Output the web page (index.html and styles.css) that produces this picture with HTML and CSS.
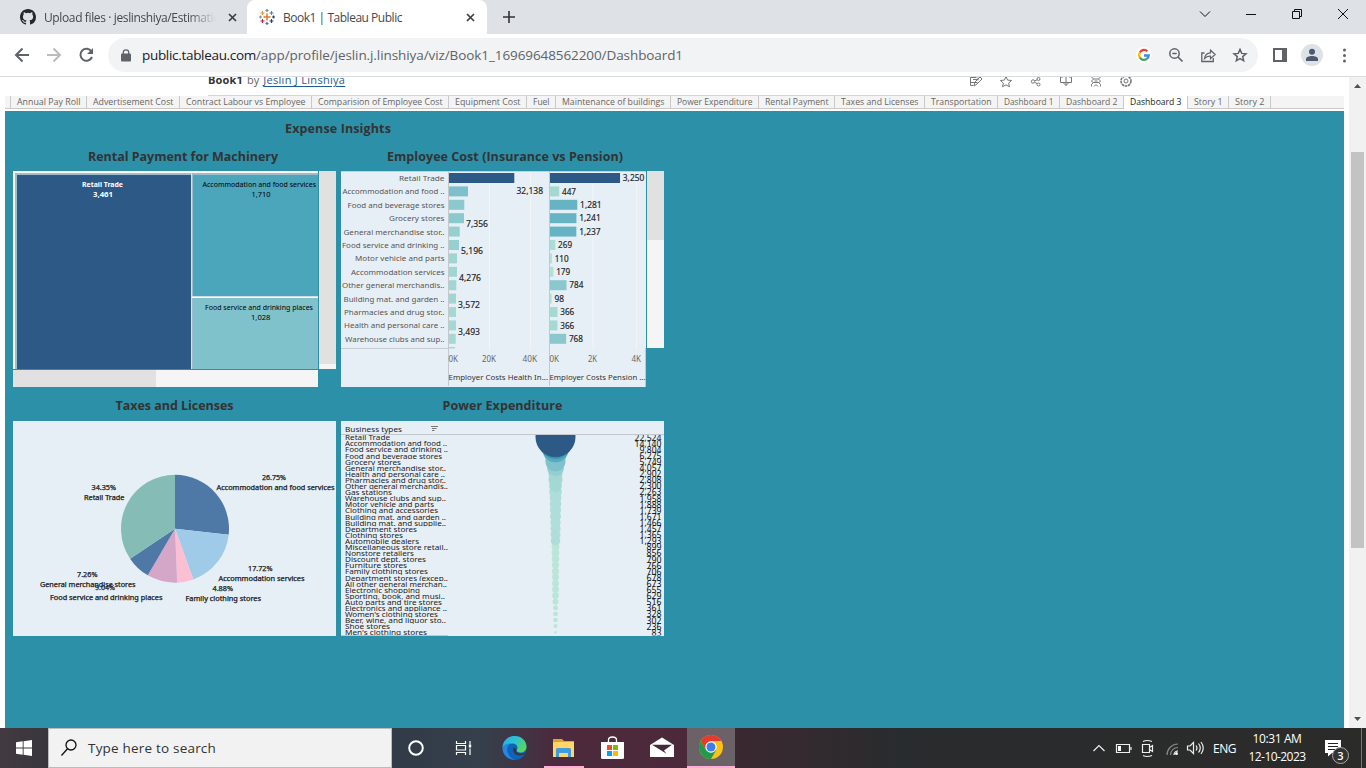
FILE: index.html
```html
<!DOCTYPE html>
<html lang="en">
<head>
<meta charset="utf-8">
<title>Book1 | Tableau Public</title>
<link rel="stylesheet" href="styles.css">
</head>
<body>
<div class="screen">
  <header class="tabstrip">
    <div class="tab">
      <svg class="fav" width="16" height="16" viewBox="0 0 16 16"><path fill="#24292f" d="M8 0C3.58 0 0 3.58 0 8c0 3.54 2.29 6.53 5.47 7.59.4.07.55-.17.55-.38v-1.49c-2.01.37-2.53-.49-2.69-.94-.09-.23-.48-.94-.82-1.13-.28-.15-.68-.52-.01-.53.63-.01 1.08.58 1.23.82.72 1.21 1.87.87 2.33.66.07-.52.28-.87.51-1.07-1.78-.2-3.64-.89-3.64-3.95 0-.87.31-1.59.82-2.15-.08-.2-.36-1.02.08-2.12 0 0 .67-.21 2.2.82a7.6 7.6 0 0 1 4 0c1.53-1.04 2.2-.82 2.2-.82.44 1.1.16 1.92.08 2.12.51.56.82 1.27.82 2.15 0 3.07-1.87 3.75-3.65 3.95.29.25.54.73.54 1.48v2.2c0 .21.15.46.55.38A8 8 0 0 0 16 8c0-4.42-3.58-8-8-8z"/></svg>
      <span class="tab-title fade"><span data-fit="183">Upload files · jeslinshiya/Estimation</span></span>
      <svg class="close" width="9" height="9" viewBox="0 0 9 9"><path d="M1 1l7 7M8 1l-7 7"/></svg>
    </div>
    <div class="tab active">
      <svg class="fav" width="16" height="16" viewBox="0 0 16 16" fill="none" stroke-width="1.2"><path stroke="#e8762d" stroke-width="1.5" d="M8 4.5v7M4.5 8h7"/><path stroke="#c72035" d="M3.5 10v4M1.5 12h4"/><path stroke="#5b879b" d="M12.5 2v4M10.5 4h4M8 0v3M6.5 1.5h3"/><path stroke="#eb912c" d="M3.5 2v4M1.5 4h4"/><path stroke="#1f447d" d="M12.5 10v4M10.5 12h4M14.5 6.5v3M13 8h3"/><path stroke="#7199a6" d="M1.5 6.5v3M0 8h3"/><path stroke="#59659b" d="M8 13v3M6.5 14.5h3"/></svg>
      <span class="tab-title"><span data-fit="119">Book1 | Tableau Public</span></span>
      <svg class="close" width="9" height="9" viewBox="0 0 9 9"><path d="M1 1l7 7M8 1l-7 7"/></svg>
    </div>
    <svg class="newtab" width="12" height="12" viewBox="0 0 12 12"><path d="M6 0v12M0 6h12" stroke="#333" stroke-width="1.6"/></svg>
    <svg class="wincontrols" width="166" height="34" viewBox="1190 0 166 34" fill="none" stroke="#111" stroke-width="1"><path d="M1200 11.5l5 5 5-5"/><path d="M1246 14.5h10"/><path d="M1292.500 11.500h7v7h-7zM1294.500 11.500v-2h7v7h-2"/><path d="M1338 9l10 10M1348 9l-10 10"/></svg>
  </header>

  <div class="toolbar">
    <svg class="nav" width="92" height="34" viewBox="8 38 92 34" fill="none" stroke-width="2"><path stroke="#5f6368" d="M29 55H16M22.500 48.500L16 55l6.500 6.500"/><path stroke="#babcbe" d="M47 55h13M53.500 48.500L60 55l-6.500 6.500"/><path stroke="#5f6368" d="M91.500 51.500A6 6 0 1 0 92 57"/><path fill="#5f6368" stroke="none" d="M93 48v6h-6z"/></svg>
    <div class="omnibox">
      <svg class="lock" width="10" height="13" viewBox="0 0 10 13"><path fill="#5f6368" d="M1 4.500h8q1 0 1 1v6q0 1-1 1H1q-1 0-1-1v-6q0-1 1-1z"/><path d="M2.300 5V3.300a2.700 2.500 0 0 1 5.400 0V5" fill="none" stroke="#5f6368" stroke-width="1.300"/></svg>
      <span class="url"><b data-fit="114">public.tableau.com</b><span data-fit="427">/app/profile/jeslin.j.linshiya/viz/Book1_16969648562200/Dashboard1</span></span>
      <svg class="omni-icons" width="118" height="34" viewBox="1132 38 118 34" fill="none"><circle cx="1144" cy="55" r="8" fill="#fff"/><g stroke-width="2.300"><path stroke="#ea4335" d="M1139.900 52.500a4.700 4.700 0 0 1 7.500-1.200"/><path stroke="#fbbc05" d="M1139.900 52.500a4.700 4.700 0 0 0 0 5"/><path stroke="#34a853" d="M1139.900 57.500a4.700 4.700 0 0 0 7.200 1.200"/><path stroke="#4285f4" d="M1147.100 58.700a4.700 4.700 0 0 0 1.600-3.200H1144"/></g><g stroke="#5f6368" stroke-width="1.500"><circle cx="1174.500" cy="53.500" r="4.700"/><path d="M1178 57l4.500 4.500M1172.300 53.500h4.400" stroke-width="1.700"/><path d="M1204.500 53h-2.700v8.500h11.500V58" stroke-width="1.300"/><path d="M1204.500 58.500c.5-4 3-5.500 6-5.700v-2.600l4.700 4.300-4.700 4.200v-2.600c-3-.2-4.500.7-6 2.400z" stroke-width="1.200"/><path d="M1240 49.400l1.700 4 4.300.4-3.300 2.800 1 4.200-3.700-2.200-3.700 2.200 1-4.200-3.300-2.800 4.300-.4z" stroke-width="1.500"/></g></svg>
    </div>
    <svg class="profile" width="98" height="34" viewBox="1264 38 98 34"><path fill="#5f6368" fill-rule="evenodd" d="M1273 48h14v14h-14zM1275 50v10h7V50z"/><circle cx="1312" cy="55" r="11" fill="#dee1e6"/><circle cx="1312" cy="51.700" r="3" fill="#4d5a70"/><path fill="#4d5a70" d="M1306 61v-2c0-4 12-4 12 0v2z"/><g fill="#5f6368"><circle cx="1344.500" cy="50" r="1.500"/><circle cx="1344.500" cy="55.500" r="1.500"/><circle cx="1344.500" cy="61" r="1.500"/></g></svg>
  </div>

  <div class="viewport">
    <main class="page">
      <div class="vizhead">
        <div class="byline"><b data-fit="35">Book1</b><span>by</span><a data-fit="82">Jeslin J Linshiya</a></div>
        <svg class="actions" width="164" height="18" viewBox="969 77 164 18" fill="none" stroke="#777"><path d="M976.500 77.500h-6v8h3M970.500 82.500h7M978 77.500v3M974 86l1-4 5-5 2 2-5 5zM973 79.500h4"/><path d="M1006 76.500l1.600 3.600 4 .4-3 2.600.9 3.700-3.500-2-3.500 2 .9-3.700-3-2.600 4-.4z"/><circle cx="1033" cy="81.500" r="1.700"/><circle cx="1038.500" cy="79" r="1.500"/><circle cx="1038.500" cy="84.500" r="1.500"/><path d="M1035 80.800l2-1M1035 82.500l2 1M1063 77h-2.500v5.500h11V77H1069M1066 77v8.500M1063.500 83l2.500 2.500 2.500-2.500"/><path d="M1091.500 77l2 2h5l2-2M1091.500 86.500v-2l2-2h5l2 2v2M1093.500 79l-2 2 2 2M1098.500 79l2 2-2 2M1094 86.500l2-2 2 2M1094.500 81h3"/><circle cx="1126" cy="81" r="5" stroke-width="1.600" stroke-dasharray="2.600 .6"/><circle cx="1126" cy="81" r="2"/></svg>
      </div>
      <nav class="sheets" id="sheets"></nav>
      <section class="dashboard">
        <h1><span data-fit="106">Expense Insights</span></h1>
        <div class="grid">
          <article>
            <h2 class="rental"><span data-fit="190">Rental Payment for Machinery</span></h2>
            <div class="scrollbox">
              <svg id="treemap" width="305" height="198" viewBox="13 171 305 198"></svg>
              <div class="bar vert full"><i></i></div>
              <div class="bar horiz"><i></i></div>
            </div>
          </article>
          <article>
            <h2 class="cost"><span data-fit="236">Employee Cost (Insurance vs Pension)</span></h2>
            <div class="scrollbox">
              <svg id="bars" class="tall" width="305" height="216" viewBox="341 171 305 216"></svg>
              <div class="bar vert short"><i></i></div>
            </div>
          </article>
          <article>
            <h2 class="second"><span data-fit="118">Taxes and Licenses</span></h2>
            <svg id="pie" width="323" height="215" viewBox="13 421 323 215"></svg>
          </article>
          <article>
            <h2 class="second"><span data-fit="120">Power Expenditure</span></h2>
            <svg id="power" width="323" height="215" viewBox="341 421 323 215"></svg>
          </article>
        </div>
      </section>
    </main>
    <div class="pagescroll">
      <svg width="17" height="17" viewBox="0 0 17 17"><path fill="#505050" d="M5 11h7L8.500 7z"/></svg>
      <div class="thumb"></div>
      <svg width="17" height="17" viewBox="0 0 17 17"><path fill="#505050" d="M5 6h7l-3.500 4z"/></svg>
    </div>
  </div>

  <footer class="taskbar">
    <svg class="start" width="48" height="40" viewBox="0 0 48 40"><path fill="#fff" d="M16 14.300l6.700-1v6.300H16zM23.600 13.200l8.400-1.200v7.600h-8.400zM16 20.500h6.700v6.300l-6.700-1zM23.600 20.500H32V28l-8.400-1.200z"/></svg>
    <div class="search">
      <svg width="18" height="18" viewBox="0 0 18 18" fill="none" stroke="#111" stroke-width="1.300"><circle cx="10" cy="6" r="5"/><path d="M6.500 9.700L.5 16.500"/></svg>
      <span data-fit="128">Type here to search</span>
    </div>
    <svg width="296" height="40" viewBox="392 728 296 40" fill="none">
      <circle cx="416" cy="748" r="6.800" stroke="#fff" stroke-width="2"/>
      <g stroke="#fff" stroke-width="1.200"><path d="M456.500 741v2.500h9V741M456.500 755v-2.500h9v2.500M456.500 745.500h9v4.500h-9zM470 741v3.500M470 748.500v6.500"/><path d="M470 744.500v3" stroke-width="2.400"/></g>
      <defs><linearGradient id="eg" x1="0" y1="0" x2="1" y2=".6"><stop offset="0" stop-color="#2aa7e8"/><stop offset=".5" stop-color="#2bc3d2"/><stop offset="1" stop-color="#5bd65a"/></linearGradient></defs>
      <circle cx="514.500" cy="748" r="12" fill="#0c65bd"/><path fill="url(#eg)" d="M502.500 748c0-7 5.500-12 12-12 7 0 12 5 12 10.500 0 4-3 6-6 6-3.500 0-4.500-1.500-3.500-3 1.500-3-.5-6-4.500-6-5 0-9.500 2-10 4.500z"/><path fill="#2b86d9" d="M502.500 748c1-3 4-4.500 8-4.500-3 2-4 5-3 8.500 1 4 4 7 8 8-7 0-13-5-13-12z"/><path fill="#3a3443" d="M516.500 749.500c-1 2 .5 4 4 4 2 0 4-.5 5.500-1.500-1 2.500-3.500 3.500-6.500 3.500-4.500 0-7.500-4-6-8 1 .2 2.500 1 3 2z"/>
      <path fill="#e2a32b" d="M553 739h9l2 2h10v4h-21z"/><path fill="#ffd667" d="M553 742h21v15h-21z"/><path fill="#3d9be0" d="M556 749.500q0-1.500 1.500-1.500h12q1.500 0 1.500 1.500V757h-3v-4h-9v4h-3z"/>
      <path fill="#ffaed6" d="M544 766h40v2h-40z"/>
      <path d="M608.500 743v-3q0-3 4-3t4 3v3" stroke="#fff" stroke-width="1.300"/><path fill="#fff" d="M601 742h23v15.500q0 1.500-1.500 1.500h-20q-1.500 0-1.500-1.500z"/><path fill="#f25022" d="M607 745h5v5h-5z"/><path fill="#7fba00" d="M613 745h5v5h-5z"/><path fill="#00a4ef" d="M607 751h5v5h-5z"/><path fill="#ffb900" d="M613 751h5v5h-5z"/>
      <path fill="#fff" d="M650 745l12-7.500 12 7.500v12h-24z"/><path fill="#46283a" d="M652 744.800h20l-8 5.800 2.500 3.200z"/>
    </svg>
    <div class="running">
      <svg width="24" height="24" viewBox="-12 -12 24 24"><circle r="12" fill="#fbc116"/><path fill="#e33b2e" d="M-10.400-6A12 12 0 0 1 10.400-6H0L-5.200 3z"/><path fill="#219b4b" d="M-10.400-6A12 12 0 0 0 0 12L5.200 3H-5.200z"/><circle r="5.700" fill="#fff"/><circle r="4.500" fill="#3f7de8"/></svg>
    </div>
    <div class="tray">
      <svg width="118" height="40" viewBox="1090 728 118 40" fill="none" stroke="#eee" stroke-width="1.200"><path d="M1093.500 751l5.500-5.500 5.500 5.500"/><path d="M1116.500 744.500h13v8h-13zM1131 747v3"/><path fill="#fff" stroke="none" d="M1118 746h3v5h-3z"/><path d="M1142.500 744.500h7v8h-7zM1149.500 747.500l3-2v6l-3-2M1143 741.500q4-2 9 0M1143 755.500q4 2 9 0"/><path d="M1167 755a11 11 0 0 1 11-11M1170.500 755a7.500 7.500 0 0 1 7.500-7.500" stroke="#888"/><path d="M1174 755a4 4 0 0 1 4-4" stroke="#fff"/><circle cx="1176.500" cy="753.500" r="1.500" fill="#fff" stroke="none"/><path d="M1187.500 746h2.500l3.500-3.500v11L1190 750h-2.500zM1196 745.500q2 2.500 0 5M1198.500 743.500q3.500 4.500 0 9M1201 742q4.500 6 0 12"/></svg>
      <span class="lang" data-fit="23">ENG</span>
      <span class="clock"><span data-fit="49">10:31 AM</span><span data-fit="57">12-10-2023</span></span>
      <svg class="notice" width="48" height="40" viewBox="1318 728 48 40"><path fill="#fff" d="M1325 740h16v13h-9l-4 3.500V753h-3z"/><path stroke="#222" d="M1328 743.500h10M1328 746.500h10M1328 749.500h7"/><circle cx="1340.500" cy="755.500" r="8" fill="#333" stroke="#aaa"/><text class="count" x="1340.500" y="759.500">3</text><path stroke="#777" d="M1361.500 728v40"/></svg>
    </div>
  </footer>
</div>
<script src="charts.js"></script>
</body>
</html>
```
FILE: styles.css
```css
* { box-sizing: border-box; }
body { margin: 0; font-family: "Open Sans", "Noto Sans", sans-serif; overflow: hidden; }
svg { display: block; flex: none; }
.screen { width: 1366px; height: 768px; display: flex; flex-direction: column; overflow: hidden; }

.tabstrip { height: 34px; flex: none; background: #dee1e6; display: flex; align-items: center; }
.tab { display: flex; align-items: center; height: 34px; width: 247px; padding: 0 10px 0 20px; font-size: 12px; color: #45494d; }
.tab.active { width: 240px; background: #fff; border-radius: 8px 8px 0 0; padding: 0 12px 0 12px; }
.tab-title { flex: 1; margin-left: 8px; overflow: hidden; white-space: nowrap; }
.fade { flex: none; width: 172px; -webkit-mask-image: linear-gradient(90deg, #000 84%, transparent); mask-image: linear-gradient(90deg, #000 84%, transparent); }
.tab:first-child .close { margin-left: 12px; }
.close path { stroke: #3c4043; stroke-width: 1.7; }
.newtab { margin-left: 16px; }
.wincontrols { margin-left: auto; margin-right: 10px; }

.toolbar { height: 43px; flex: none; background: #fff; border-bottom: 1px solid #dadce0; display: flex; align-items: center; padding: 0 4px 0 8px; }
.omnibox { width: 1150px; height: 34px; margin-left: 8px; border-radius: 17px; background: #f1f3f4; display: flex; align-items: center; padding: 0 8px 0 13px; }
.url { margin-left: 11px; font-size: 13.5px; color: #5f6368; white-space: nowrap; }
.url b { color: #202124; font-weight: 400; }
.omni-icons { margin-left: auto; }
.profile { margin-left: auto; }

.viewport { height: 651px; flex: none; display: flex; overflow: hidden; background: #fff; }
.page { width: 1344px; padding-left: 5px; display: flex; flex-direction: column; }
.vizhead { height: 19px; flex: none; width: 933px; margin-left: 203px; border-bottom: 1px solid #d4d4d4; display: flex; justify-content: space-between; overflow: hidden; }
.byline { display: flex; gap: 4px; height: 17px; margin-top: -6px; font-size: 11px; line-height: 17px; white-space: nowrap; color: #666; }
.byline b { color: #333; }
.byline a { color: #1f5d8c; text-decoration: underline; text-underline-offset: 2px; }
.actions { margin-right: 8px; }

.sheets { height: 13px; flex: none; background: #f4f4f4; border-bottom: 1px solid #c9c9c9; display: flex; padding-left: 5px; }
.sheet { height: 13px; border-left: 1px solid #c9c9c9; }
.sheet text { font-family: "Open Sans", "Noto Sans", sans-serif; font-size: 9.5px; fill: #666; }
.sheet.current { background: #fff; }
.sheet.current text { fill: #222; }

.dashboard { margin-top: 2px; flex: 1; background: #2c90a8; padding-left: 8px; }
.dashboard h1, .dashboard h2 { margin: 0; text-align: center; font-size: 12.5px; font-weight: 700; color: #333; white-space: nowrap; }
.dashboard h1 { width: 650px; height: 32px; line-height: 35px; }
.dashboard h2 { height: 28px; line-height: 28px; }
.dashboard h2.rental { padding-left: 17px; }
.dashboard h2.cost { padding-left: 5px; }
.dashboard h2.second { height: 34px; line-height: 37px; }
.grid { display: grid; grid-template-columns: 323px 323px; column-gap: 5px; }
.scrollbox { display: grid; grid-template-columns: 305px 17px; grid-template-rows: 198px 17px; gap: 1px; height: 216px; }
.tall { grid-row: 1 / 3; }
.bar { background: #f5f5f5; }
.bar i { display: block; background: #e1e1e1; }
.bar.full i { height: 193px; }
.bar.short { height: 177px; }
.bar.short i { height: 69px; }
.bar.horiz i { height: 17px; width: 143px; }

#treemap, #bars, #pie, #power { font-family: "Noto Sans", "Open Sans", sans-serif; font-size: 7px; }
#bars, #pie, #power { background: #e7eff6; }
#bars .lab { font-size: 7.5px; fill: #555; }
#bars .val { font-size: 8px; fill: #222; stroke: #222; stroke-width: .15px; }
#bars .axis { font-size: 8px; fill: #666; }
#bars .cap { font-size: 7.8px; fill: #333; }
#pie text { fill: #222; stroke: #222; stroke-width: .25px; font-size: 6.5px; }
#power .lab { font-size: 7.8px; fill: #222; }
#power .val { font-size: 8px; fill: #111; }
.white { fill: #fff; font-weight: 700; }

.pagescroll { width: 17px; margin-left: auto; background: #f1f1f1; display: flex; flex-direction: column; }
.thumb { width: 13px; height: 396px; margin: 58px 2px auto; background: #c3c3c3; }

.taskbar { height: 40px; flex: none; display: flex; background: linear-gradient(90deg, #423a40 0, #38363d 48px, #303b47 392px, #35404c 480px, #4c293c 560px, #4c293a 686px, #3a2830 740px, #292c2e 900px, #2b2b29 1366px); }
.search { width: 344px; height: 40px; background: #f2f2f2; border: 1px solid #bbb; display: flex; align-items: center; padding-left: 12px; gap: 9px; font-size: 13.5px; color: #333; white-space: nowrap; }
.running { width: 48px; height: 40px; margin-left: -1px; background: #6b6267; border-bottom: 2px solid #ffaed6; display: flex; align-items: center; justify-content: center; }
.tray { margin-left: auto; display: flex; align-items: center; color: #fff; font-size: 12px; white-space: nowrap; }
.lang { width: 24px; margin-left: 5px; }
.clock { width: 70px; margin-left: 5px; display: flex; flex-direction: column; align-items: center; line-height: 18px; margin-right: 6px; }
.count { font-size: 11px; fill: #fff; text-anchor: middle; font-weight: 600; }
```
FILE: charts.js
```js
document.querySelectorAll('[data-fit]').forEach(function (el) {
  var range = document.createRange();
  range.selectNodeContents(el);
  var gap = (Number(el.dataset.fit) - range.getBoundingClientRect().width) / el.textContent.length;
  el.style.letterSpacing = gap.toFixed(3) + 'px';
});

function text(x1, x2, y, str, cls) {
  return '<text x="' + x1 + '" y="' + y + '" textLength="' + (x2 - x1) + '" lengthAdjust="spacingAndGlyphs" class="' + (cls || '') + '">' + str + '</text>';
}
function rect(x, y, w, h, fill) {
  return '<rect x="' + x + '" y="' + y + '" width="' + w + '" height="' + h + '" fill="' + fill + '"/>';
}
function put(id, html) { document.getElementById(id).innerHTML = html; }

var edges = [10, 86, 179, 311, 448, 526, 555, 670, 758, 834, 924, 997, 1059, 1123, 1187, 1228, 1270];
var names = ['Annual Pay Roll', 'Advertisement Cost', 'Contract Labour vs Employee', 'Comparision of Employee Cost', 'Equipment Cost', 'Fuel', 'Maintenance of buildings', 'Power Expenditure', 'Rental Payment', 'Taxes and Licenses', 'Transportation', 'Dashboard 1', 'Dashboard 2', 'Dashboard 3', 'Story 1', 'Story 2'];
put('sheets', names.map(function (n, i) {
  var w = edges[i + 1] - edges[i];
  return '<div class="sheet' + (n === 'Dashboard 3' ? ' current' : '') + '"><svg width="' + (w - 1) + '" height="12">' + text(6, w - 6.5, 9, n) + '</svg></div>';
}).join('') + '<div class="sheet"></div>');

// Treemap
put('treemap',
  rect(13, 171, 305, 198, '#fff') + rect(15, 173, 303, 196, '#9fbccb') +
  rect(17, 175, 174, 194, '#2c5985') + rect(191, 173, 1, 196, '#d3e5ed') +
  rect(193, 175, 125, 121, '#4ba5bb') + rect(192, 296.500, 126, 1.500, '#fff') + rect(193, 298, 125, 71, '#80c2cb') +
  text(82, 123, 187, 'Retail Trade', 'white') + text(93, 113, 197, '3,461', 'white') +
  text(202.500, 316, 187, 'Accommodation and food services') + text(251.500, 270.500, 197, '1,710') +
  text(205, 313, 310, 'Food service and drinking places') + text(251, 270.500, 320, '1,028'));

// Bars: label, label start, insurance bar width, pension, colours
var rows = [
  ['Retail Trade', 399, 65.300, 3250, '#2c5985', '#2c5985'],
  ['Accommodation and food ..', 342.500, 19, 447, '#7dc0cb', '#a3d8d3'],
  ['Food and beverage stores', 347.500, 15.300, 1281, '#8ac9ce', '#66b4c3'],
  ['Grocery stores', 389, 15, 1241, '#8ac9ce', '#66b4c3'],
  ['General merchandise stor..', 343.500, 10.700, 1237, '#95cfd0', '#66b4c3'],
  ['Food service and drinking ..', 342, 10, 269, '#97d0d1', '#aaddd5'],
  ['Motor vehicle and parts', 355, 8, 110, '#a0d6d2', '#b3e1d7'],
  ['Accommodation services', 351, 8, 179, '#a0d6d2', '#b0e0d6'],
  ['Other general merchandis..', 342, 7.300, 784, '#a0d6d2', '#8ac8ce'],
  ['Building mat. and garden ..', 343.500, 7, 98, '#a0d6d2', '#b3e1d7'],
  ['Pharmacies and drug stor..', 344, 7, 366, '#a3d8d3', '#a5d9d4'],
  ['Health and personal care ..', 344, 7, 366, '#a3d8d3', '#a5d9d4'],
  ['Warehouse clubs and sup..', 345, 6.700, 768, '#a3d8d3', '#8ac8ce']
];
var out = '';
[489, 530, 592.500, 636].forEach(function (x) { out += rect(x, 171, 1, 179, '#f2f5f5'); });
rows.forEach(function (r, i) {
  var y = 173 + i * 13.400, w = r[3] * 0.0217;
  out += text(r[1], 444.500, y + 8, r[0], 'lab');
  out += rect(449, y, r[2], 10, r[4]) + rect(549.500, y, w, 10, r[5]);
  var s = r[3] > 999 ? String(r[3]).replace(/^(\d)/, '$1,') : String(r[3]);
  var len = s.length === 5 ? 21.500 : s.length === 3 ? 14 : 9.500;
  out += text(552.300 + w, 552.300 + w + len, y + 8.100, s, 'val');
});
out += rect(449, 347.300, 6, 1, '#8ac9ce');
[['32,138', 516.500, 543, 194.300], ['7,356', 466, 488, 227.300], ['5,196', 461, 483, 254.300], ['4,276', 459, 481, 280.800], ['3,572', 458, 480, 307.800], ['3,493', 458, 480, 334.800]].forEach(function (v) {
  out += text(v[1], v[2], v[3], v[0], 'val');
});
out += rect(341, 171, 305, 1, '#c4d0d6') + rect(341, 348, 107, 1, '#c8ccd0') + rect(448, 171, 1, 215, '#c4c8cc') + rect(549, 171, 1, 215, '#c4c8cc') + rect(645, 348, 1, 39, '#c4c8cc');
[['0K', 448.500, 458], ['20K', 482, 496], ['40K', 522.500, 537], ['0K', 549.500, 559], ['2K', 588, 597], ['4K', 631.500, 641]].forEach(function (a) {
  out += text(a[1], a[2], 362, a[0], 'axis');
});
out += text(448.500, 548, 380, 'Employer Costs Health In...', 'cap') + text(549.500, 645.500, 380, 'Employer Costs Pension ...', 'cap');
put('bars', out);

// Pie
var angle = 0;
out = '';
[[26.75, '#4e79a7'], [17.72, '#a0cbe8'], [4.88, '#fabfd2'], [9.04, '#d4a6c8'], [7.26, '#4e79a7'], [34.35, '#86bcb6']].forEach(function (s) {
  function at(a) { return (175 + 54 * Math.sin(a)).toFixed(2) + ' ' + (528.7 - 54 * Math.cos(a)).toFixed(2); }
  var end = angle + s[0] / 100 * 2 * Math.PI;
  out += '<path fill="' + s[1] + '" d="M175 528.7L' + at(angle) + 'A54 54 0 0 1 ' + at(end) + 'z"/>';
  angle = end;
});
out += text(262, 286, 480, '26.75%') + text(216.500, 334.500, 490, 'Accommodation and food services') +
  text(91.500, 116, 490, '34.35%') + text(84, 124.500, 500, 'Retail Trade') +
  text(77, 97.500, 577, '7.26%') + text(40, 135.500, 587, 'General merchandise stores') +
  text(95, 115, 590, '9.04%') + text(50, 162.500, 600, 'Food service and drinking places') +
  text(248, 272.500, 571, '17.72%') + text(218.500, 304.500, 581, 'Accommodation services') +
  text(212.500, 233, 591, '4.88%') + text(185.500, 261, 601, 'Family clothing stores');
put('pie', out);

// Power expenditure: label, label end, value
var power = [
  ['Retail Trade', 390, 22524], ['Accommodation and food ..', 447, 14140], ['Food service and drinking ..', 448, 9804], ['Food and beverage stores', 442, 6275], ['Grocery stores', 401, 5749], ['General merchandise stor..', 446, 4057], ['Health and personal care ..', 445, 2902], ['Pharmacies and drug stor..', 446, 2808], ['Other general merchandis..', 448, 2300], ['Gas stations', 392, 2263], ['Warehouse clubs and sup..', 446, 1958], ['Motor vehicle and parts', 434, 1888], ['Clothing and accessories', 438, 1739], ['Building mat. and garden ..', 446, 1671], ['Building mat. and supplie..', 446, 1466], ['Department stores', 417, 1457], ['Clothing stores', 403, 1365], ['Automobile dealers', 419, 1293], ['Miscellaneous store retail..', 448, 899], ['Nonstore retailers', 414, 856], ['Discount dept. stores', 426, 790], ['Furniture stores', 407, 766], ['Family clothing stores', 428, 706], ['Department stores (excep..', 448, 678], ['All other general merchan..', 447, 673], ['Electronic shopping', 420, 655], ['Sporting, book, and  musi..', 445, 629], ['Auto parts and tire stores', 442, 516], ['Electronics and appliance ..', 447, 361], ["Women's clothing stores", 438, 328], ['Beer, wine, and liquor sto..', 446, 302], ['Shoe stores', 390, 236], ["Men's clothing stores", 427, 83]
];
out = '<defs><clipPath id="body"><rect x="341" y="435" width="323" height="200.5"/></clipPath></defs><g clip-path="url(#body)">';
for (var i = power.length - 1; i >= 0; i--) {
  var v = power[i][2];
  var c = v > 20000 ? '#2c5985' : v > 14000 ? '#3694ae' : v > 9000 ? '#55abbe' : v > 5000 ? '#80c2cb' : v > 4000 ? '#94ced0' : v > 2270 ? '#a3d8d3' : v > 1200 ? '#afdeda' : '#bae6d9';
  out += '<circle cx="555.500" cy="' + (437 + i * 6.1) + '" r="' + (20 * Math.sqrt(v / 22524)).toFixed(2) + '" fill="' + c + '"/>';
}
power.forEach(function (p, i) {
  var y = 434.500 + i * 6.1, s = p[2].toLocaleString('en-US');
  var len = s.length === 6 ? 27 : s.length === 5 ? 22 : s.length === 3 ? 15 : 10;
  out += '<svg x="341" y="' + y + '" width="120" height="6.3" viewBox="341 ' + y + ' 120 6.3">' + text(345, p[1], y + 5.700, p[0], 'lab') + '</svg>';
  out += text(661.500 - len, 661.500, y + 6, s, 'val');
});
out += '</g>' + text(345, 402, 432, 'Business types', 'lab') + rect(341, 434, 323, 1, '#c4c8cc') + rect(341, 635, 107, 1, '#c4c8cc') +
  '<path stroke="#777" d="M431 426.500h7M432 428.500h4.500M432 430.500h2.500"/>';
put('power', out);
```
